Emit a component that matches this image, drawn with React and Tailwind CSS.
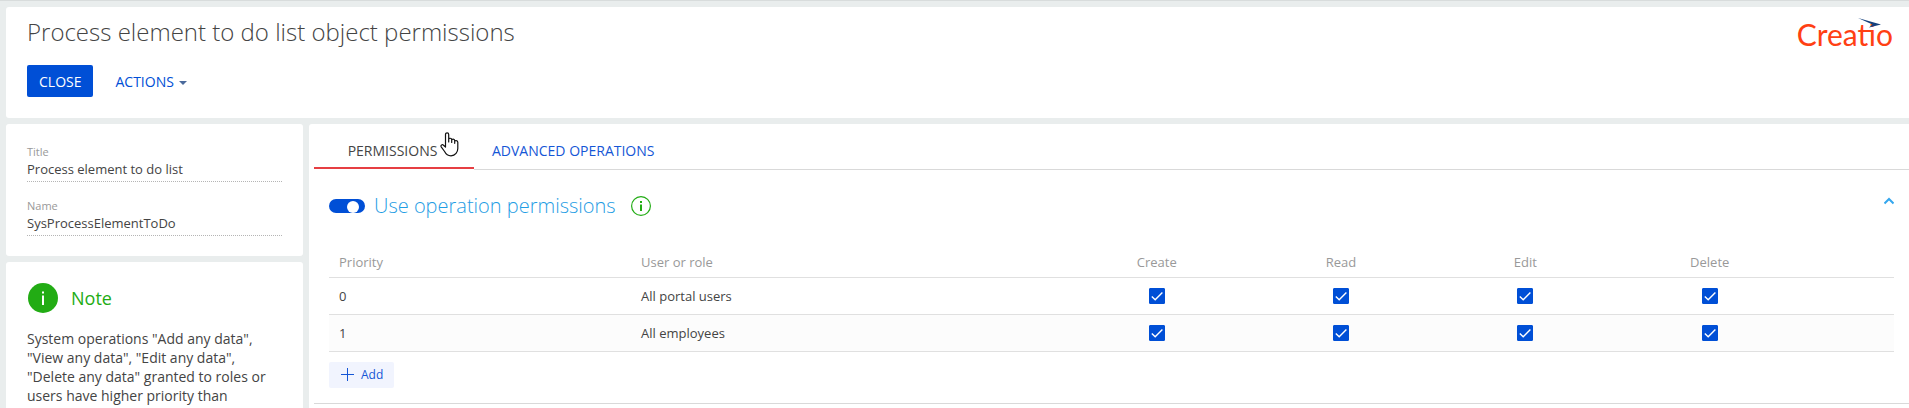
import React, { useState } from 'react'
import clsx from 'clsx'

const INITIAL_ROWS = [
  { priority: 0, role: 'All portal users', create: true, read: true, edit: true, delete: true },
  { priority: 1, role: 'All employees', create: true, read: true, edit: true, delete: true },
]

const OPERATIONS = [
  { key: 'create', label: 'Create' },
  { key: 'read', label: 'Read' },
  { key: 'edit', label: 'Edit' },
  { key: 'delete', label: 'Delete' },
]

export default function App() {
  const [rows, setRows] = useState(INITIAL_ROWS)

  const toggle = (priority, key) =>
    setRows(rows.map(r => (r.priority === priority ? { ...r, [key]: !r[key] } : r)))

  return (
    <div className="min-h-screen flex flex-col gap-1.5 pl-1.5 pt-1.5 border-t border-[#d8dcdc] bg-[#e9eded] text-[#444] font-['Open_Sans',sans-serif]">
      <PageHeader />

      <div className="flex-1 flex gap-1.5">
        {/* Left column */}
        <aside className="w-[297px] shrink-0 flex flex-col gap-1.5">
          <section className="bg-white rounded-[3px] px-[21px] py-5 flex flex-col gap-4">
            <Field id="title" label="Title" value="Process element to do list" />
            <Field id="name" label="Name" value="SysProcessElementToDo" />
          </section>
          <Note />
        </aside>

        {/* Permissions */}
        <main className="flex-1 min-w-0 bg-white rounded-tl-[3px] pl-[5px]">
          <Tabs />
          <section className="px-[15px] pt-6 pb-[15px] border-b border-[#d9d9d9]">
            <div className="flex items-center h-6">
              <Switch />
              <h2 className="ml-[9px] text-[20px] leading-6 font-light text-[#1f9de4]">Use operation permissions</h2>
              <button aria-label="Info" className="ml-[15px]">
                <svg width="20" height="20" viewBox="0 0 20 20" fill="none">
                  <circle cx="10" cy="10" r="9.4" stroke="#22ac14" strokeWidth="1.2" />
                  <path d="M9 5h2v2H9zM9 8.5h2V15H9z" fill="#22ac14" />
                </svg>
              </button>
              <button aria-label="Collapse" className="ml-auto self-start pt-[3px]">
                <svg width="10" height="8" viewBox="0 0 10 8" fill="none" className="block">
                  <path d="M.5 6.5 5 2l4.5 4.5" stroke="#35a7ee" strokeWidth="2" />
                </svg>
              </button>
            </div>

            <table className="mt-[29px] w-full table-fixed border-collapse text-[13px] leading-5">
              <thead>
                <tr className="h-[30px] border-b border-[#e0e0e0] text-[#999]">
                  <th className="w-[19.3%] px-2.5 text-left font-normal">Priority</th>
                  <th className="w-[27.7%] px-2.5 text-left font-normal">User or role</th>
                  {OPERATIONS.map(({ key, label }) => (
                    <th key={key} className="w-[11.78%] font-normal">{label}</th>
                  ))}
                  <th></th>
                </tr>
              </thead>
              <tbody>
                {rows.map(row => (
                  <tr key={row.priority} className="h-[37px] border-b border-[#e0e0e0] even:bg-[#fcfcfc]">
                    <td className="px-2.5">{row.priority}</td>
                    <td className="px-2.5">{row.role}</td>
                    {OPERATIONS.map(({ key, label }) => (
                      <td key={key}>
                        <CheckBox
                          label={`${label}: ${row.role}`}
                          checked={row[key]}
                          onChange={() => toggle(row.priority, key)}
                        />
                      </td>
                    ))}
                    <td></td>
                  </tr>
                ))}
              </tbody>
            </table>

            <button className="mt-2.5 h-[26px] pl-3 pr-[11px] flex items-center gap-[7px] rounded-[2px] bg-[#f1f4fe] text-[#1556d6] text-[12px]">
              <svg width="13" height="13" viewBox="0 0 13 13" fill="none">
                <path d="M6.5 0v13M0 6.5h13" stroke="#1556d6" />
              </svg>
              Add
            </button>
          </section>
        </main>
      </div>
    </div>
  )
}

function PageHeader() {
  return (
    <header className="h-[111px] bg-white rounded-l-[3px] pl-[21px] pr-4 pt-[9px] flex justify-between">
      <div>
        <h1 className="text-[24px] leading-8 font-light">Process element to do list object permissions</h1>
        <div className="mt-[17px] flex items-center">
          <button className="h-8 px-3 rounded-[2px] bg-[#004fd6] text-white text-[14px]">CLOSE</button>
          <button className="ml-[22px] flex items-center gap-[5px] text-[14px] text-[#004fd6]">
            ACTIONS
            <svg width="8" height="4" viewBox="0 0 8 4" className="mt-1">
              <path d="M0 0h8L4 4z" fill="#4a6a9c" />
            </svg>
          </button>
        </div>
      </div>
      <Logo />
    </header>
  )
}

function Logo() {
  return (
    <div className="relative h-9 text-[30px] leading-9 text-[#ff4013] font-['Lato',sans-serif]">
      Creatio
      <svg width="24" height="10" viewBox="0 0 24 10" className="absolute right-3 top-0.5">
        <path d="M1 0 24 6.6 12 9.5 15.5 6.5z" fill="#14407c" />
      </svg>
    </div>
  )
}

function Field({ id, label, value }) {
  return (
    <div className="flex flex-col">
      <label htmlFor={id} className="text-[11px] leading-4 text-[#999]">{label}</label>
      <input
        id={id}
        readOnly
        defaultValue={value}
        className="h-[22px] pb-1 w-full text-[13px] bg-transparent border-b border-dotted border-[#b5b5b5] outline-none"
      />
    </div>
  )
}

function Note() {
  return (
    <section className="flex-1 bg-white rounded-t-[3px] px-[21px] pt-[21px]">
      <div className="flex items-center gap-[13px] pl-px">
        <svg width="30" height="30" viewBox="0 0 30 30">
          <circle cx="15" cy="15" r="15" fill="#22ac14" />
          <path d="M14 8.5h2v2h-2zM14 12.5h2V22h-2z" fill="#fff" />
        </svg>
        <h2 className="text-[18px] leading-6 text-[#22ac14]">Note</h2>
      </div>
      <p className="mt-4 text-[14px] leading-[19px]">
        System operations "Add any data", "View any data", "Edit any data", "Delete any data" granted to roles or users have higher priority than
      </p>
    </section>
  )
}

function Tabs() {
  return (
    <nav className="h-[46px] flex text-[14px]">
      <button className="relative w-40 mb-px pr-[3px] pt-[9px] border-b-2 border-[#e63f43]">
        PERMISSIONS
        <HandCursor />
      </button>
      <div className="flex-1 flex border-b border-[#d9d9d9]">
        <button className="pl-[18px] pt-[7px] text-[#1556d6]">ADVANCED OPERATIONS</button>
      </div>
    </nav>
  )
}

function HandCursor() {
  return (
    <svg width="19" height="25" viewBox="0 0 19 25" className="absolute right-[15px] top-2" aria-hidden="true">
      <path
        d="M5.5 15V2.5C5.5 .2 8.7.2 8.7 2.5V10V7.5C8.7 5.7 11.7 5.9 11.7 7.8V10.5V8.3C11.7 6.6 14.7 6.9 14.7 8.8V11.3V9.6C14.7 8 17.8 8.2 17.8 10.2V16.5C17.8 20 15.4 23.8 11 23.8C7.5 23.8 5.9 22.2 4.6 19.5L1.2 14.8C.3 13.2 2.4 12 3.5 13.2L5.5 15Z"
        fill="#fff" stroke="#111" strokeWidth="1.2" strokeLinejoin="round"
      />
    </svg>
  )
}

function Switch() {
  const [on, setOn] = useState(true)

  return (
    <input
      type="checkbox"
      role="switch"
      aria-label="Use operation permissions"
      checked={on}
      onChange={() => setOn(!on)}
      className={clsx(
        'appearance-none w-9 h-3.5 rounded-full overflow-hidden before:block before:size-3 before:mt-0.5 before:rounded-full before:bg-white',
        on ? 'bg-[#004fd6] before:ml-[18px]' : 'bg-gray-400 before:ml-1.5'
      )}
    />
  )
}

function CheckBox({ label, checked, onChange }) {
  return (
    <label className="relative block size-4 mx-auto">
      <input
        type="checkbox"
        aria-label={label}
        checked={checked}
        onChange={onChange}
        className="block appearance-none size-4 rounded-[1px] border border-[#004fd6] checked:bg-[#004fd6]"
      />
      {checked && (
        <svg width="16" height="16" viewBox="0 0 16 16" fill="none" className="absolute inset-0 pointer-events-none">
          <path d="M2.8 8.4 6.2 11.8 13.4 4.4" stroke="#fff" strokeWidth="1.4" />
        </svg>
      )}
    </label>
  )
}
